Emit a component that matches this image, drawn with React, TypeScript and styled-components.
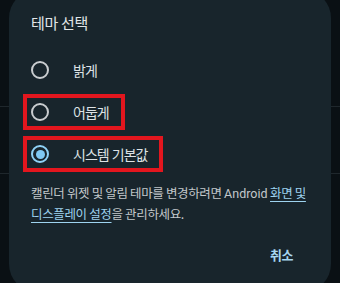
import React from 'react'
import styled, { createGlobalStyle } from 'styled-components'

const GlobalStyle = createGlobalStyle`
  html, body {
    margin: 0;
    padding: 0;
    background: #0a1014;
    overflow: hidden;
  }
  body {
    font-family: 'Noto Sans CJK KR', Roboto, 'Noto Sans', sans-serif;
  }
`

const Screen = styled.div`
  position: relative;
  width: 340px;
  height: 283px;
  overflow: hidden;
  background: #0a1014;
`

// list behind the scrim
const BackList = styled.div`
  display: flex;
  flex-direction: column;
  padding-top: 106px;
`

const BackRow = styled.div`
  height: 66px;
  border-top: 1px solid #1f272c;
`

const Dialog = styled.div`
  position: absolute;
  left: 9px;
  top: -10px;
  width: 322px;
  height: 302px;
  box-sizing: border-box;
  border-radius: 28px;
  background: #18252c;
  padding: 22px 22px 0 22px;
  display: flex;
  flex-direction: column;
`

const Title = styled.div`
  font-size: 15px;
  line-height: 22px;
  color: #e1e5e8;
  letter-spacing: -0.3px;
`

const Options = styled.div`
  display: flex;
  flex-direction: column;
  margin-top: 15px;
`

const Row = styled.div`
  height: 42px;
  display: flex;
  align-items: center;
`

const Target = styled.div<{ $marked?: boolean }>`
  display: inline-flex;
  align-items: center;
  height: 36px;
  box-sizing: border-box;
  margin-left: -8px;
  padding: 0 12px 0 4px;
  border: 4px solid ${({ $marked }) => ($marked ? '#e3161e' : 'transparent')};
`

const Radio = styled.span<{ $checked?: boolean }>`
  width: 18px;
  height: 18px;
  box-sizing: border-box;
  border-radius: 50%;
  border: 2px solid ${({ $checked }) => ($checked ? '#8fd2f6' : '#c9cdd0')};
  display: flex;
  align-items: center;
  justify-content: center;
  flex-shrink: 0;

  &::after {
    content: '';
    width: 9px;
    height: 9px;
    border-radius: 50%;
    background: ${({ $checked }) => ($checked ? '#7fc9f3' : 'transparent')};
  }
`

const Label = styled.span`
  margin-left: 24px;
  font-size: 14px;
  line-height: 20px;
  color: #dde2e5;
  letter-spacing: -1px;
  word-spacing: 1px;
  white-space: nowrap;
`

const Description = styled.p`
  margin: 8px 0 0 0;
  font-size: 12.5px;
  line-height: 20px;
  color: #c3c8cb;
  letter-spacing: -0.35px;
  white-space: nowrap;
`

const Latin = styled.span`
  font-family: Roboto, sans-serif;
  letter-spacing: 0;
`

const TextLink = styled.span`
  color: #9ed3ef;
  text-decoration: underline;
  text-underline-offset: 3px;
`

const Actions = styled.div`
  display: flex;
  justify-content: flex-end;
  margin-top: 21px;
  padding-right: 16px;
`

const TextButton = styled.span`
  font-size: 13px;
  font-weight: 700;
  color: #a6d6f0;
  letter-spacing: -0.4px;
`

const options = [
  { label: '밝게', checked: false, marked: false },
  { label: '어둡게', checked: false, marked: true },
  { label: '시스템 기본값', checked: true, marked: true },
]

const App: React.FC = () => {
  return (
    <Screen>
      <GlobalStyle />
      <BackList>
        <BackRow />
        <BackRow />
      </BackList>
      <Dialog>
        <Title>테마 선택</Title>
        <Options>
          {options.map((o) => (
            <Row key={o.label}>
              <Target $marked={o.marked}>
                <Radio $checked={o.checked} />
                <Label>{o.label}</Label>
              </Target>
            </Row>
          ))}
        </Options>
        <Description>
          캘린더 위젯 및 알림 테마를 변경하려면 <Latin>Android</Latin> <TextLink>화면 및</TextLink>
          <br />
          <TextLink>디스플레이 설정</TextLink>을 관리하세요.
        </Description>
        <Actions>
          <TextButton>취소</TextButton>
        </Actions>
      </Dialog>
    </Screen>
  )
}

export default App
